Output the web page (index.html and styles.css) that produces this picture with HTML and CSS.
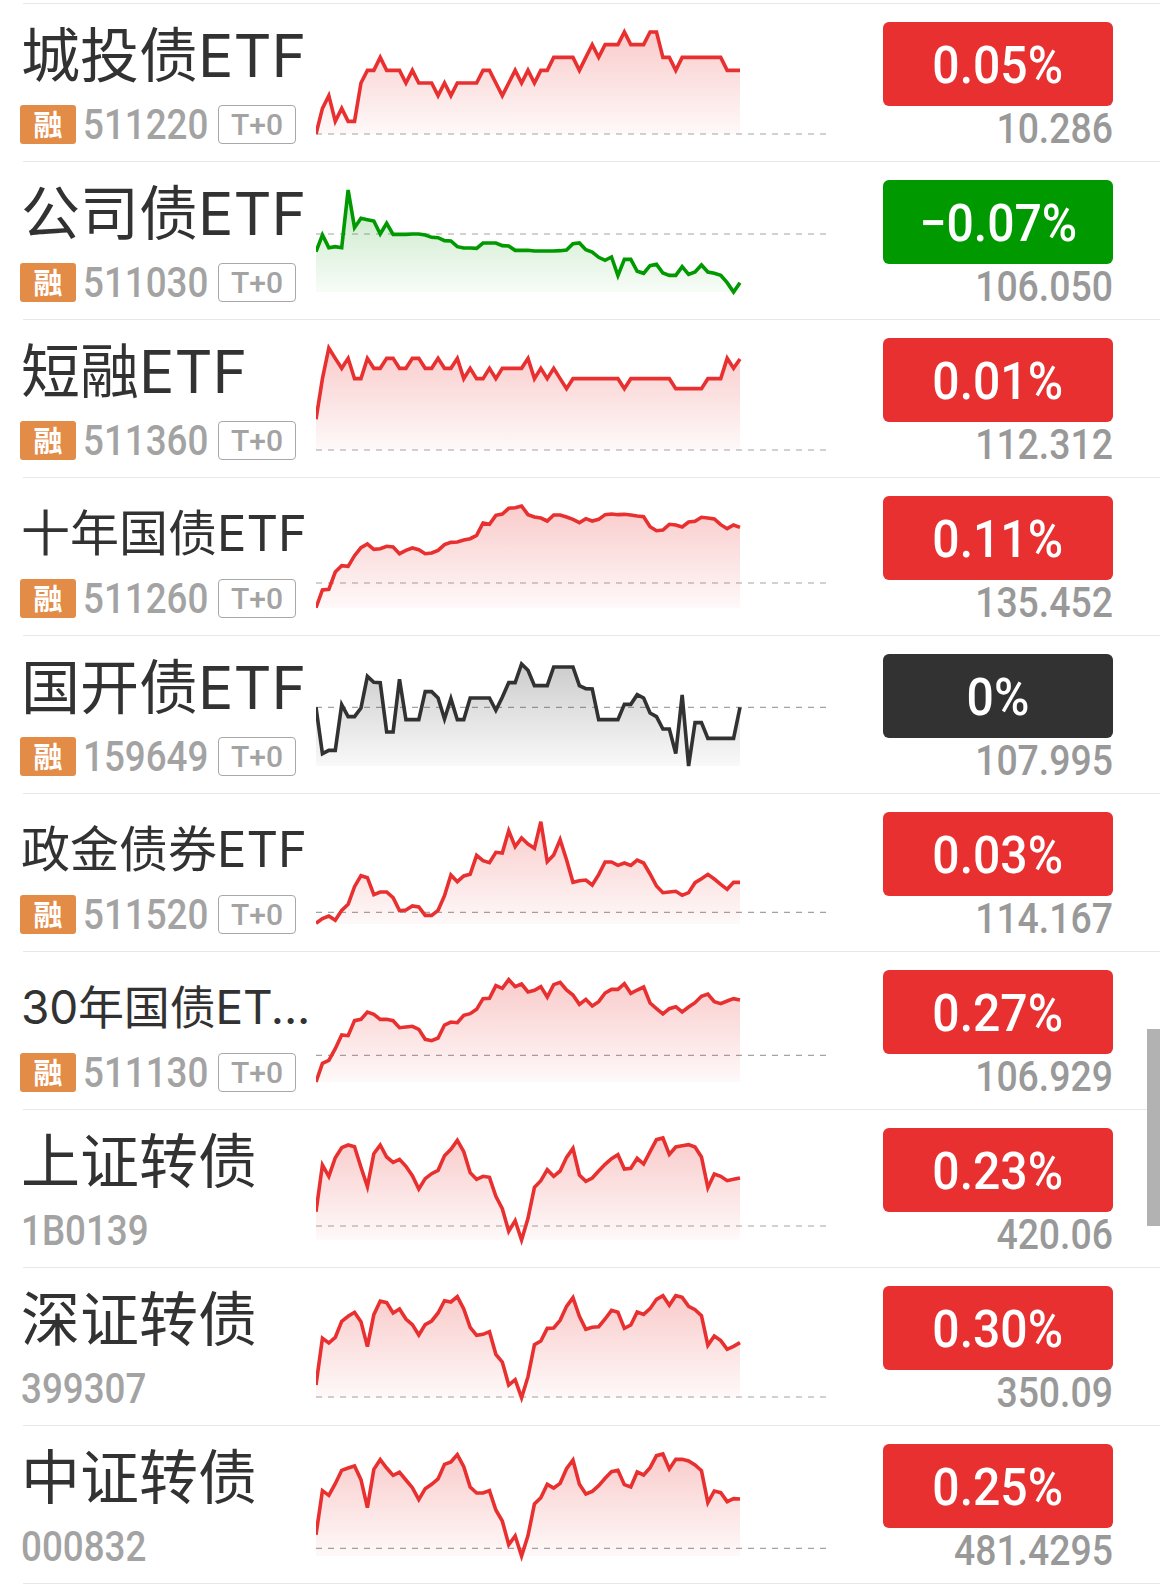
FILE: index.html
```html
<!DOCTYPE html>
<html lang="zh-CN">
<head>
  <meta charset="UTF-8">
  <meta name="viewport" content="width=device-width, initial-scale=1.0">
  <title>债券ETF</title>
  <link rel="stylesheet" href="styles.css">
</head>
<body>
  <!-- Shared gradients for the chart areas -->
  <svg class="defs" aria-hidden="true">
    <defs>
      <linearGradient id="fill-up" x1="0" y1="0" x2="0" y2="1">
        <stop offset="0" stop-color="#e83030" stop-opacity="0.25"/>
        <stop offset="1" stop-color="#e83030" stop-opacity="0.03"/>
      </linearGradient>
      <linearGradient id="fill-down" x1="0" y1="0" x2="0" y2="1">
        <stop offset="0" stop-color="#009900" stop-opacity="0.24"/>
        <stop offset="1" stop-color="#009900" stop-opacity="0.03"/>
      </linearGradient>
      <linearGradient id="fill-flat" x1="0" y1="0" x2="0" y2="1">
        <stop offset="0" stop-color="#323232" stop-opacity="0.25"/>
        <stop offset="1" stop-color="#323232" stop-opacity="0.03"/>
      </linearGradient>
    </defs>
  </svg>

  <main class="quote-list">
    <div class="quote">
      <div class="info">
        <div class="name">城投债ETF</div>
        <div class="meta"><span class="margin-tag">融</span><span class="code">511220</span><span class="t0">T+0</span></div>
      </div>
      <svg class="chart up"></svg>
      <div class="figures">
        <div class="change up"><span>0.05%</span></div>
        <div class="price">10.286</div>
      </div>
    </div>

    <div class="quote">
      <div class="info">
        <div class="name">公司债ETF</div>
        <div class="meta"><span class="margin-tag">融</span><span class="code">511030</span><span class="t0">T+0</span></div>
      </div>
      <svg class="chart down"></svg>
      <div class="figures">
        <div class="change down"><span>−0.07%</span></div>
        <div class="price">106.050</div>
      </div>
    </div>

    <div class="quote">
      <div class="info">
        <div class="name">短融ETF</div>
        <div class="meta"><span class="margin-tag">融</span><span class="code">511360</span><span class="t0">T+0</span></div>
      </div>
      <svg class="chart up"></svg>
      <div class="figures">
        <div class="change up"><span>0.01%</span></div>
        <div class="price">112.312</div>
      </div>
    </div>

    <div class="quote">
      <div class="info">
        <div class="name medium">十年国债ETF</div>
        <div class="meta"><span class="margin-tag">融</span><span class="code">511260</span><span class="t0">T+0</span></div>
      </div>
      <svg class="chart up"></svg>
      <div class="figures">
        <div class="change up"><span>0.11%</span></div>
        <div class="price">135.452</div>
      </div>
    </div>

    <div class="quote">
      <div class="info">
        <div class="name">国开债ETF</div>
        <div class="meta"><span class="margin-tag">融</span><span class="code">159649</span><span class="t0">T+0</span></div>
      </div>
      <svg class="chart flat"></svg>
      <div class="figures">
        <div class="change flat"><span>0%</span></div>
        <div class="price">107.995</div>
      </div>
    </div>

    <div class="quote">
      <div class="info">
        <div class="name medium">政金债券ETF</div>
        <div class="meta"><span class="margin-tag">融</span><span class="code">511520</span><span class="t0">T+0</span></div>
      </div>
      <svg class="chart up"></svg>
      <div class="figures">
        <div class="change up"><span>0.03%</span></div>
        <div class="price">114.167</div>
      </div>
    </div>

    <div class="quote">
      <div class="info">
        <div class="name small">30年国债ET...</div>
        <div class="meta"><span class="margin-tag">融</span><span class="code">511130</span><span class="t0">T+0</span></div>
      </div>
      <svg class="chart up"></svg>
      <div class="figures">
        <div class="change up"><span>0.27%</span></div>
        <div class="price">106.929</div>
      </div>
    </div>

    <div class="quote">
      <div class="info">
        <div class="name">上证转债</div>
        <div class="meta"><span class="code">1B0139</span></div>
      </div>
      <svg class="chart up"></svg>
      <div class="figures">
        <div class="change up"><span>0.23%</span></div>
        <div class="price">420.06</div>
      </div>
    </div>

    <div class="quote">
      <div class="info">
        <div class="name">深证转债</div>
        <div class="meta"><span class="code">399307</span></div>
      </div>
      <svg class="chart up"></svg>
      <div class="figures">
        <div class="change up"><span>0.30%</span></div>
        <div class="price">350.09</div>
      </div>
    </div>

    <div class="quote">
      <div class="info">
        <div class="name">中证转债</div>
        <div class="meta"><span class="code">000832</span></div>
      </div>
      <svg class="chart up"></svg>
      <div class="figures">
        <div class="change up"><span>0.25%</span></div>
        <div class="price">481.4295</div>
      </div>
    </div>
  </main>

  <div class="scroll-thumb"></div>
  <script src="script.js"></script>
</body>
</html>
```

FILE: styles.css
```css
body {
  margin: 0;
  height: 1589px;
  overflow: hidden;
  position: relative;
  background-color: #ffffff;
  color: #323232;
  font-family: Roboto, "Noto Sans CJK SC", sans-serif;
}

.defs {
  position: absolute;
  width: 0;
  height: 0;
}

/* Quote list */
.quote-list {
  padding-top: 3px;
}

.quote {
  display: flex;
  box-sizing: border-box;
  height: 158px;
  margin-left: 23px;
  border-top: 1px solid #e8e8e8;
}

.quote:last-child {
  height: 159px;
  border-bottom: 1px solid #e8e8e8;
}

/* Name and code */
.info {
  width: 293px;
  flex-shrink: 0;
}

.name {
  height: 101px;
  line-height: 103px;
  margin-left: -2px;
  font-family: Inter, "Noto Sans CJK SC", sans-serif;
  font-size: 59px;
  white-space: nowrap;
}

.name.medium {
  font-size: 49px;
  line-height: 111px;
}

.name.small {
  font-size: 46px;
  line-height: 111px;
  letter-spacing: -0.2px;
}

.meta {
  display: flex;
  align-items: center;
  height: 39px;
  margin-left: -3px;
}

.margin-tag {
  width: 56px;
  height: 39px;
  flex-shrink: 0;
  margin-right: 7px;
  border-radius: 3px;
  background-color: #e38c47;
  color: #ffffff;
  font-family: "Noto Sans CJK SC", sans-serif;
  font-size: 29px;
  font-weight: 700;
  line-height: 37px;
  text-align: center;
}

.code {
  width: 135px;
  flex-shrink: 0;
  color: #a3a3a3;
  font-size: 42px;
  font-weight: 500;
  line-height: 39px;
  transform: scaleX(0.875);
  transform-origin: left;
}

.code:first-child {
  margin-left: 1px;
}

.t0 {
  box-sizing: border-box;
  width: 78px;
  height: 39px;
  flex-shrink: 0;
  border: 1px solid #a8a8a8;
  border-radius: 4px;
  color: #a3a3a3;
  font-size: 30px;
  font-weight: 500;
  line-height: 38px;
  text-align: center;
}

/* Chart */
.chart {
  width: 510px;
  height: 157px;
  flex-shrink: 0;
}

.chart .line {
  fill: none;
  stroke-width: 10.8;
  stroke-linejoin: miter;
}

.chart .base {
  stroke: #323232;
  stroke-opacity: 0.45;
  stroke-width: 3.6;
  stroke-dasharray: 18 18;
}

.chart.up .line { stroke: #e83030; }
.chart.down .line { stroke: #009900; }
.chart.flat .line { stroke: #323232; }
.chart.up .area { fill: url(#fill-up); }
.chart.down .area { fill: url(#fill-down); }
.chart.flat .area { fill: url(#fill-flat); }

/* Change and price */
.figures {
  width: 230px;
  margin-left: 57px;
  padding-top: 18px;
}

.change {
  height: 84px;
  border-radius: 6px;
  color: #ffffff;
  font-size: 52px;
  font-weight: 500;
  line-height: 88px;
  text-align: center;
}

.change span {
  display: inline-block;
  transform: scaleX(0.925);
}

.change.up { background-color: #e83030; }
.change.down { background-color: #009900; }
.change.flat { background-color: #323232; }

.price {
  color: #999999;
  font-size: 42px;
  font-weight: 500;
  line-height: 46px;
  text-align: right;
  transform: scaleX(0.89);
  transform-origin: right;
}

/* Scroll indicator over the list */
.scroll-thumb {
  position: absolute;
  top: 1029px;
  right: 0;
  width: 13px;
  height: 197px;
  background-color: #b2b2b2;
}
```

FILE: script.js
```js
// top: viewBox offset, base: previous close, bottom: lower edge of the area
const charts = [
  { top: 12, base: 402, bottom: 402, points: [402,325,287,364,325,364,364,249,211,211,172,211,211,211,249,211,249,249,249,287,249,287,249,249,249,249,211,211,249,287,249,211,249,211,249,211,211,172,172,172,172,211,172,134,172,134,134,134,96,134,134,134,96,96,172,172,211,172,172,172,172,172,172,172,211,211,211] },
  { top: 6, base: 222, bottom: 396, points: [275,225,263,260,263,90,203,175,179,183,222,190,223,223,223,222,222,225,232,233,242,243,260,264,264,265,249,249,249,257,258,271,271,271,273,273,273,273,272,270,251,249,269,276,292,301,291,347,298,298,334,340,317,313,339,346,346,320,343,336,315,336,340,346,368,396,368] },
  { top: 0, base: 390, bottom: 390, points: [298,176,84,115,145,115,176,176,115,145,145,115,115,145,145,115,115,145,145,115,145,145,115,176,145,176,176,145,176,145,145,145,145,115,176,145,176,145,176,206,176,176,176,176,176,176,176,176,206,176,176,176,176,176,176,176,206,206,206,206,206,176,176,176,115,145,117] },
  { top: -6, base: 309, bottom: 384, points: [383,330,328,276,257,259,227,203,192,208,206,199,201,221,211,204,209,221,219,211,194,187,186,180,176,166,129,133,106,102,85,83,78,104,111,114,123,105,105,111,118,128,116,123,118,104,102,104,103,105,108,110,140,152,150,133,135,141,126,124,112,114,117,134,146,135,142] },
  { top: -12, base: 202, bottom: 378, points: [202,341,331,331,194,230,230,204,109,127,128,276,276,118,239,239,239,155,155,174,237,176,239,239,174,174,174,174,211,172,128,128,72,91,137,137,137,81,81,81,81,137,146,147,239,239,239,239,193,193,164,174,219,230,267,267,341,165,378,248,248,295,295,295,295,295,202] },
  { top: -3, base: 352, bottom: 387, points: [385,371,363,376,346,328,275,242,248,299,291,291,308,347,345,333,336,361,361,346,302,240,260,243,238,181,197,203,172,174,107,155,129,147,160,80,200,180,134,194,262,257,255,270,239,201,201,211,204,211,195,204,237,273,293,291,289,301,293,263,251,238,252,268,283,262,262] },
  { top: -9, base: 301, bottom: 381, points: [381,325,316,281,240,242,197,193,171,178,193,193,197,218,216,214,223,253,257,249,210,201,203,181,176,163,131,130,92,100,74,95,87,111,106,95,126,89,82,105,120,148,133,153,140,114,103,103,86,115,105,96,144,161,177,161,155,171,156,143,124,117,140,146,138,131,135] },
  { top: 0, base: 348, bottom: 389, points: [305,165,199,143,113,105,110,172,230,131,105,141,157,148,169,197,237,206,191,181,137,118,91,125,188,208,199,202,259,296,364,332,390,325,232,212,179,199,183,142,115,195,214,204,183,163,146,134,177,175,145,162,125,89,84,133,111,107,104,111,141,233,192,199,212,208,204] },
  { top: -6, base: 381, bottom: 384, points: [345,205,219,202,154,139,127,155,230,134,93,98,129,117,147,164,195,164,153,129,92,96,80,117,172,196,193,185,253,276,345,329,383,320,224,213,175,174,151,109,83,139,178,172,170,147,121,127,175,165,126,133,116,88,77,106,77,82,109,119,137,226,198,212,238,229,218] },
  { top: -9, base: 358, bottom: 381, points: [317,185,199,164,124,117,111,152,236,121,92,117,139,130,153,176,212,179,166,150,106,99,77,113,174,192,192,185,243,276,347,321,381,320,225,206,166,177,163,119,93,166,195,187,170,148,128,124,167,174,129,138,116,80,75,120,91,91,96,108,125,221,186,191,218,209,210] }
];

const chartWidth = 1272; // drawn part of the session, in viewBox units

document.querySelectorAll('.chart').forEach((svg, i) => {
  const { top, base, bottom, points } = charts[i];
  const step = chartWidth / (points.length - 1);
  const line = points.map((y, n) => (n * step).toFixed(1) + ',' + y).join(' ');

  svg.setAttribute('viewBox', `0 ${top} 1530 471`);
  svg.innerHTML = `
    <line class="base" x1="0" y1="${base}" x2="1530" y2="${base}"/>
    <polygon class="area" points="0,${bottom} ${line} ${chartWidth},${bottom}"/>
    <polyline class="line" points="${line}"/>`;
});
```
